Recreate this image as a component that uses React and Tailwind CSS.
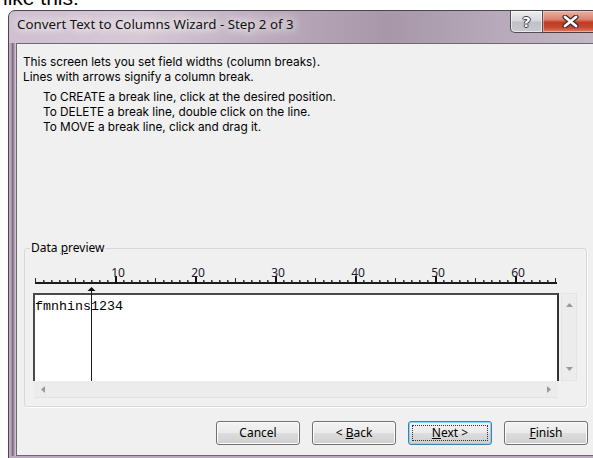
const ui = "font-['Noto_Sans',sans-serif]";

function Ruler() {
  const ticks = Array.from({ length: 66 }, (_, i) => i);
  return (
    <svg width="560" height="29" className="block">
      <rect x="10" y="18" width="522" height="2" fill="#1a1a1a" />
      {ticks.map((i) => {
        const x = 10 + 8 * i;
        if (i % 10 === 0 && i > 0) {
          return <rect key={i} x={x} y="12" width="2" height="8" fill="#111" />;
        }
        if (i % 5 === 0) {
          return <rect key={i} x={x} y="14" width="1" height="5" fill="#222" />;
        }
        return <rect key={i} x={x} y="16" width="1.5" height="2.5" fill="#333" />;
      })}
      {[10, 20, 30, 40, 50, 60].map((n) => (
        <text
          key={n}
          x={10 + 8 * n + 3}
          y="13"
          fontSize="12"
          textAnchor="middle"
          fill="#1d1b2e"
          fontFamily="Noto Sans, sans-serif"
        >
          {n}
        </text>
      ))}
      {/* column break marker */}
      <polygon points="66.5,23 62.5,27 70.5,27" fill="#111" />
      <rect x="66" y="27" width="1" height="2" fill="#111" />
    </svg>
  );
}

function Arrow({ dir }) {
  const pts = {
    up: "0,4 3.5,0 7,4",
    down: "0,0 3.5,4 7,0",
    left: "4,0 0,3.5 4,7",
    right: "0,0 4,3.5 0,7",
  }[dir];
  const vertical = dir === "up" || dir === "down";
  return (
    <svg width={vertical ? 7 : 4} height={vertical ? 4 : 7} className="block">
      <polygon points={pts} fill="#9a9a9a" />
    </svg>
  );
}

function WinButton({ children, focused }) {
  return (
    <button
      className={`relative w-[84px] h-[24px] rounded-[3px] border text-[12px] leading-[16px] text-black ${ui} bg-[linear-gradient(180deg,#f2f2f2_0%,#ebebeb_49%,#dddddd_51%,#cfcfcf_100%)] ${
        focused
          ? "border-[#3c7fb1] shadow-[inset_0_0_0_1px_#8fd3f7]"
          : "border-[#707070] shadow-[inset_0_0_0_1px_#fcfcfc]"
      }`}
    >
      {focused && (
        <span className="absolute inset-[3px] border border-dotted border-[#333]" />
      )}
      <span className="relative">{children}</span>
    </button>
  );
}

function TitleBar() {
  return (
    <div className="h-[32px] flex items-start">
      <div
        className={`pl-[8px] pt-[5px] text-[13.3px] leading-[17px] text-[#111] ${ui} [text-shadow:0_0_8px_#fff,0_0_12px_#fff,0_0_16px_rgba(255,255,255,0.9)]`}
      >
        Convert Text to Columns Wizard - Step 2 of 3
      </div>
      <div className="ml-auto mr-[3px] flex">
        <div className="w-[33px] h-[22px] rounded-bl-[5px] border border-t-0 border-[#4e5058] bg-[linear-gradient(180deg,#eeeef0_0%,#d6d7db_48%,#c0c1c6_52%,#c9cace_100%)] shadow-[inset_0_0_0_1px_rgba(255,255,255,0.6)] flex items-center justify-center">
          <span className="text-[14px] leading-[14px] font-bold text-white font-['DejaVu_Sans',sans-serif] [text-shadow:1px_0_0_#3a3c44,-1px_0_0_#3a3c44,0_1px_0_#3a3c44,0_-1px_0_#3a3c44]">
            ?
          </span>
        </div>
        <div className="w-[56px] h-[22px] rounded-br-[5px] border border-l-0 border-t-0 border-[#4e3a38] bg-[linear-gradient(180deg,#eab1a4_0%,#d98470_40%,#c0391f_55%,#c94b30_80%,#e0806a_100%)] shadow-[inset_0_0_0_1px_rgba(255,220,210,0.5)] flex items-center justify-center">
          <svg width="17" height="13" viewBox="0 0 17 13">
            <path d="M3 2 L14 11 M14 2 L3 11" stroke="#3b2a28" strokeWidth="5" strokeLinecap="round" />
            <path d="M3 2 L14 11 M14 2 L3 11" stroke="#fff" strokeWidth="2.8" strokeLinecap="round" />
          </svg>
        </div>
      </div>
    </div>
  );
}

function DataPreview() {
  return (
    <div className="relative ml-[7px] mt-[113px] w-[563px] h-[159px] rounded-[3px] border border-[#d5d9dd] shadow-[1px_1px_0_#fff]">
      <div className="absolute left-[5px] -top-[9px] px-[1px] bg-[#f0f0f0] text-[12px] leading-[16px] text-black">
        Data <span className="underline">p</span>review
      </div>
      <div className="mt-[15px]">
        <Ruler />
      </div>
      <div className="flex ml-[8px]">
        <div className="relative w-[526px] h-[88px] bg-white border-t-2 border-l-2 border-r-2 border-t-[#4a4a4a] border-l-[#4a4a4a] border-r-[#333]">
          <div className="pt-[4px] text-[13.33px] leading-[16px] text-black font-['Liberation_Mono','Courier_New',monospace]">
            fmnhins1234
          </div>
          <div className="absolute left-[56px] -top-[2px] bottom-0 w-px bg-[#1a1a1a]" />
        </div>
        <div className="ml-[2px] w-[16px] h-[88px] bg-[#ececec] border border-[#e4e4e4] flex flex-col items-center justify-between py-[9px]">
          <Arrow dir="up" />
          <Arrow dir="down" />
        </div>
      </div>
      <div className="ml-[9px] w-[524px] h-[17px] bg-[#ececec] border-b border-[#e2e2e2] flex items-center justify-between px-[7px]">
        <Arrow dir="left" />
        <Arrow dir="right" />
      </div>
    </div>
  );
}

export default function App() {
  return (
    <div className={`w-[593px] h-[458px] overflow-hidden bg-white ${ui}`}>
      <div className="h-[10px] overflow-hidden pl-[3px]">
        <div className="-mt-[13px] text-[21px] leading-[21px] text-black font-['Liberation_Sans',Arial,sans-serif]">
          like this:
        </div>
      </div>
      <div className="ml-[8px] w-[595px] h-[452px] flex flex-col overflow-hidden rounded-t-[7px] border border-[#4a4650] bg-[linear-gradient(90deg,#cfbfcf_0%,#d6c8d5_22%,#b6a6b7_48%,#a797a9_64%,#b6a9b9_82%,#c5b9c7_100%)]">
        <TitleBar />
        <div className="flex">
          <div className="w-[7px] bg-[linear-gradient(90deg,#c4aec4_0%,#b9a3ba_30%,#7a687c_50%,#a08da1_70%,#dccfdc_100%)]" />
          <div className="w-[579px] h-[413px] flex flex-col border border-[#6d6872] bg-[#f0f0f0]">
            <div className="pt-[11px] pl-[6px] text-[11.8px] leading-[15px] text-black font-['Inter',sans-serif]">
              <p>This screen lets you set field widths (column breaks).</p>
              <p>Lines with arrows signify a column break.</p>
              <div className="mt-[5px] pl-[20px]">
                <p>To CREATE a break line, click at the desired position.</p>
                <p>To DELETE a break line, double click on the line.</p>
                <p>To MOVE a break line, click and drag it.</p>
              </div>
            </div>
            <DataPreview />
            <div className="mt-[14px] flex justify-end gap-[12px] pr-[6px]">
              <WinButton>Cancel</WinButton>
              <WinButton>
                &lt; <span className="underline">B</span>ack
              </WinButton>
              <WinButton focused>
                <span className="underline">N</span>ext &gt;
              </WinButton>
              <WinButton>
                <span className="underline">F</span>inish
              </WinButton>
            </div>
          </div>
          <div className="w-[7px] bg-[#c5b9c7]" />
        </div>
        <div className="flex-1 bg-[#bba9bf]" />
      </div>
    </div>
  );
}
